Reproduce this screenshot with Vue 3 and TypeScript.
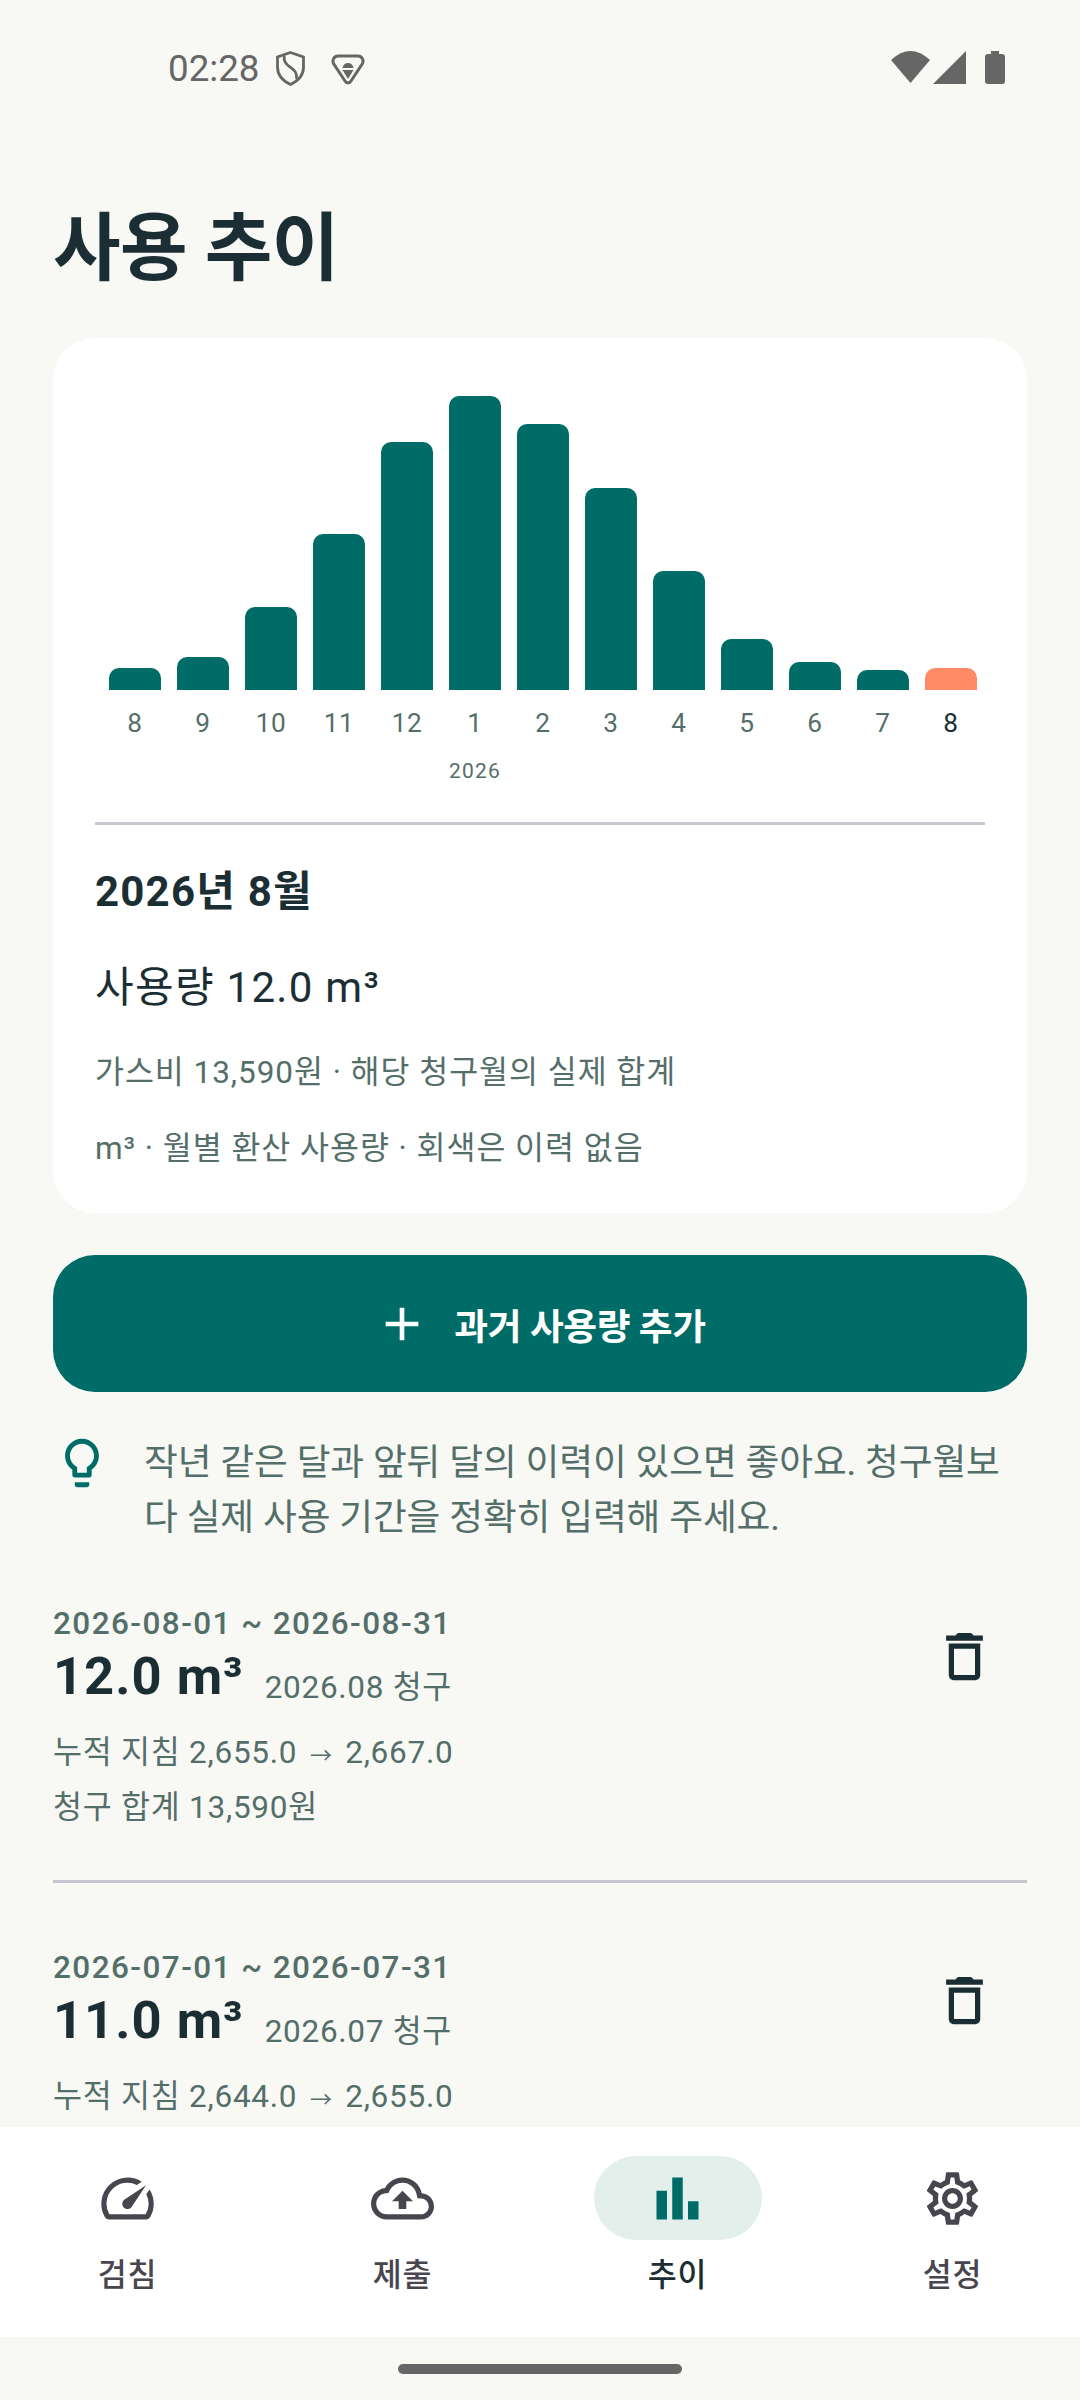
<script setup lang="ts">
interface Bar { month: number; height: number; current?: boolean; year?: string }
interface RecordRow { period: string; value: string; billed: string; from: string; to: string; total?: string }
interface NavItem { label: string; path: string; active?: boolean }

const bars: Bar[] = [
  { month: 8, height: 22 }, { month: 9, height: 33 }, { month: 10, height: 83 },
  { month: 11, height: 156 }, { month: 12, height: 248 }, { month: 1, height: 294, year: '2026' },
  { month: 2, height: 266 }, { month: 3, height: 202 }, { month: 4, height: 119 },
  { month: 5, height: 51 }, { month: 6, height: 28 }, { month: 7, height: 20 },
  { month: 8, height: 22, current: true },
]

const records: RecordRow[] = [
  { period: '2026-08-01 ~ 2026-08-31', value: '12.0 m³', billed: '2026.08 청구', from: '2,655.0', to: '2,667.0', total: '청구 합계 13,590원' },
  { period: '2026-07-01 ~ 2026-07-31', value: '11.0 m³', billed: '2026.07 청구', from: '2,644.0', to: '2,655.0' },
]

const nav: NavItem[] = [
  { label: '검침', path: 'M20.38 8.57l-1.23 1.85a8 8 0 0 1-.22 7.58H5.07A8 8 0 0 1 15.58 6.85l1.85-1.23A10 10 0 0 0 3.35 19a2 2 0 0 0 1.72 1h13.85a2 2 0 0 0 1.74-1 10 10 0 0 0-.27-10.44zm-9.79 6.84a2 2 0 0 0 2.83 0l5.66-8.49-8.49 5.66a2 2 0 0 0 0 2.83z' },
  { label: '제출', path: 'M19.35 10.04C18.67 6.59 15.64 4 12 4 9.11 4 6.6 5.64 5.35 8.04 2.34 8.36 0 10.91 0 14c0 3.31 2.69 6 6 6h13c2.76 0 5-2.24 5-5 0-2.64-2.05-4.78-4.65-4.96zM19 18H6c-2.21 0-4-1.79-4-4 0-2.05 1.53-3.76 3.56-3.97l1.07-.11.5-.95C8.08 7.14 9.94 6 12 6c2.62 0 4.88 1.86 5.39 4.43l.3 1.5 1.53.11c1.56.1 2.78 1.41 2.78 2.96 0 1.65-1.35 3-3 3zM8 13h2.55v3h2.9v-3H16l-4-4z' },
  { label: '추이', active: true, path: 'M4 9h4v11H4zm12 4h4v7h-4zm-6-9h4v16h-4z' },
  { label: '설정', path: 'M19.43 12.98c.04-.32.07-.64.07-.98 0-.34-.03-.66-.07-.98l2.11-1.65c.19-.15.24-.42.12-.64l-2-3.46c-.09-.16-.26-.25-.44-.25-.06 0-.12.01-.17.03l-2.49 1c-.52-.4-1.08-.73-1.69-.98l-.38-2.65C14.46 2.18 14.25 2 14 2h-4c-.25 0-.46.18-.49.42l-.38 2.65c-.61.25-1.17.59-1.69.98l-2.49-1c-.06-.02-.12-.03-.18-.03-.17 0-.34.09-.43.25l-2 3.46c-.13.22-.07.49.12.64l2.11 1.65c-.04.32-.07.65-.07.98 0 .33.03.66.07.98l-2.11 1.65c-.19.15-.24.42-.12.64l2 3.46c.09.16.26.25.44.25.06 0 .12-.01.17-.03l2.49-1c.52.4 1.08.73 1.69.98l.38 2.65c.03.24.24.42.49.42h4c.25 0 .46-.18.49-.42l.38-2.65c.61-.25 1.17-.59 1.69-.98l2.49 1c.06.02.12.03.18.03.17 0 .34-.09.43-.25l2-3.46c.12-.22.07-.49-.12-.64l-2.11-1.65zm-1.98-1.71c.04.31.05.52.05.73 0 .21-.02.43-.05.73l-.14 1.13.89.7 1.08.84-.7 1.21-1.27-.51-1.04-.42-.9.68c-.43.32-.84.56-1.25.73l-1.06.43-.16 1.13-.2 1.35h-1.4l-.19-1.35-.16-1.13-1.06-.43c-.43-.18-.83-.41-1.23-.71l-.91-.7-1.06.43-1.27.51-.7-1.21 1.08-.84.89-.7-.14-1.13c-.03-.31-.05-.54-.05-.74s.02-.43.05-.73l.14-1.13-.89-.7-1.08-.84.7-1.21 1.27.51 1.04.42.9-.68c.43-.32.84-.56 1.25-.73l1.06-.43.16-1.13.2-1.35h1.39l.19 1.35.16 1.13 1.06.43c.43.18.83.41 1.23.71l.91.7 1.06-.43 1.27-.51.7 1.21-1.07.85-.89.7.14 1.13zM12 8c-2.21 0-4 1.79-4 4s1.79 4 4 4 4-1.79 4-4-1.79-4-4-4zm0 6c-1.1 0-2-.9-2-2s.9-2 2-2 2 .9 2 2-.9 2-2 2z' },
]
</script>

<template>
  <div class="phone">
    <header class="status">
      <span class="time">02:28</span>
      <svg class="shield" width="29" height="35" viewBox="0 0 29 35" fill="none" stroke="#666" stroke-width="2.800">
        <path d="M14.500 1.500 27.500 6v10c0 8-5.500 14-13 17.500C7 30 1.500 24 1.500 16V6z" />
        <path d="M8.500 5c-1.500 5 1 8 5.500 11s7.500 6 6.500 12" />
      </svg>
      <svg class="vpn" width="34" height="31" viewBox="0 0 34 31">
        <path d="M7 2h20c4 0 6 4 4.500 7.500L20 27c-1.500 2.500-4.500 2.500-6 0L2.500 9.500C1 6 3 2 7 2z" fill="none" stroke="#666" stroke-width="3" />
        <path d="M11.500 14c.3-3 2.500-5 5.500-5s5.200 2 5.500 5zM11.500 16h11L17 25z" fill="#666" />
      </svg>
      <div class="status-right">
        <svg width="39" height="32" viewBox="0 0 39 32"><path d="M0 9Q19.500-9 39 9L19.500 32Z" fill="#666" /></svg>
        <svg width="33" height="33" viewBox="0 0 33 33"><path d="M33 0V33H0Z" fill="#666" /></svg>
        <svg class="battery" width="20" height="33" viewBox="0 0 20 33"><path d="M6 0h8v3h3a3 3 0 0 1 3 3v24a3 3 0 0 1-3 3H3a3 3 0 0 1-3-3V6a3 3 0 0 1 3-3h3z" fill="#666" /></svg>
      </div>
    </header>

    <main class="content">
      <h1 class="title">사용 추이</h1>

      <section class="card">
        <div class="chart">
          <div v-for="(bar, index) in bars" :key="index" class="column">
            <div class="plot">
              <div class="bar" :class="{ 'bar-current': bar.current }" :style="{ height: bar.height + 'px' }"></div>
            </div>
            <span class="month" :class="{ 'month-current': bar.current }">{{ bar.month }}</span>
            <span v-if="bar.year" class="year">{{ bar.year }}</span>
          </div>
        </div>
        <hr class="rule" />
        <h2 class="selected">2026년 8월</h2>
        <p class="usage">사용량 12.0 m³</p>
        <p class="note note-first">가스비 13,590원 · 해당 청구월의 실제 합계</p>
        <p class="note note-second">m³ · 월별 환산 사용량 · 회색은 이력 없음</p>
      </section>

      <button class="add" type="button">
        <svg width="56" height="56" viewBox="0 0 24 24" fill="#fff"><path d="M19 13h-6v6h-2v-6H5v-2h6V5h2v6h6v2z" /></svg>
        <span>과거 사용량 추가</span>
      </button>

      <div class="tip">
        <svg class="bulb" width="58" height="58" viewBox="0 0 24 24" fill="#006c67"><path d="M9 21c0 .55.45 1 1 1h4c.55 0 1-.45 1-1v-1H9v1zm3-19C8.140 2 5 5.140 5 9c0 2.380 1.190 4.470 3 5.740V17c0 .55.45 1 1 1h6c.55 0 1-.45 1-1v-2.260c1.810-1.270 3-3.360 3-5.740 0-3.860-3.140-7-7-7zm2.850 11.100l-.85.6V16h-4v-2.300l-.85-.6C7.800 12.160 7 10.630 7 9c0-2.760 2.240-5 5-5s5 2.240 5 5c0 1.630-.8 3.160-2.150 4.100z" /></svg>
        <p>작년 같은 달과 앞뒤 달의 이력이 있으면 좋아요. 청구월보다 실제 사용 기간을 정확히 입력해 주세요.</p>
      </div>

      <article v-for="record in records" :key="record.period" class="record">
        <div class="record-info">
          <div class="period">{{ record.period }}</div>
          <div class="value-row">
            <span class="value">{{ record.value }}</span>
            <span class="billed">{{ record.billed }}</span>
          </div>
          <div class="detail detail-first">누적 지침 {{ record.from }} <span class="arrow">→</span> {{ record.to }}</div>
          <div v-if="record.total" class="detail">{{ record.total }}</div>
        </div>
        <button class="delete" type="button" aria-label="삭제">
          <svg width="63" height="63" viewBox="0 0 24 24" fill="#1a2e33"><path d="M16 9v10H8V9h8m-1.500-6h-5l-1 1H5v2h14V4h-3.500l-1-1zM18 7H6v12c0 1.100.9 2 2 2h8c1.100 0 2-.9 2-2V7z" /></svg>
        </button>
      </article>
    </main>

    <nav class="nav">
      <div v-for="item in nav" :key="item.label" class="nav-item" :class="{ 'nav-active': item.active }">
        <div class="pill">
          <svg width="63" height="63" viewBox="0 0 24 24"><path :d="item.path" /></svg>
        </div>
        <span class="nav-label">{{ item.label }}</span>
      </div>
    </nav>

    <div class="gesture"><div class="handle"></div></div>
  </div>
</template>

<style>
html, body { margin: 0; padding: 0; background: #f8f8f4; }
</style>

<style scoped>
.phone {
  width: 1080px;
  height: 2400px;
  display: flex;
  flex-direction: column;
  overflow: hidden;
  background: #f8f8f4;
  color: #1a2e33;
  font-family: Roboto, "Noto Sans CJK KR", sans-serif;
}
.status {
  flex: 0 0 126px;
  box-sizing: border-box;
  display: flex;
  align-items: flex-start;
  padding: 51px 75px 0 168px;
}
.time {
  font-size: 36.75px;
  line-height: 36px;
  color: #666;
  width: 108px;
}
.shield { flex: none; }
.vpn { flex: none; margin: 3px 0 0 26px; }
.status-right {
  margin-left: auto;
  display: flex;
  align-items: flex-start;
  gap: 3px;
}
.battery { margin-left: 16px; }
.content {
  flex: 1;
  min-height: 0;
  overflow: hidden;
  padding: 0 53px;
}
.title {
  margin: 73px 0 39px;
  font-size: 73.5px;
  line-height: 100px;
  font-weight: 700;
  letter-spacing: -0.6px;
}
.card {
  background: #fff;
  border-radius: 42px;
  padding: 42px 42px 40px;
}
.chart {
  display: flex;
  justify-content: center;
  gap: 16px;
  height: 442px;
  padding-left: 6px;
}
.column {
  flex: 0 0 52px;
  min-width: 0;
  width: 52px;
  display: flex;
  flex-direction: column;
  align-items: center;
}
.plot {
  flex: none;
  width: 100%;
  height: 310px;
  display: flex;
  align-items: flex-end;
}
.bar {
  width: 100%;
  background: #006c67;
  border-radius: 10px 10px 0 0;
}
.bar-current { background: #ff8a65; }
.month {
  margin-top: 17px;
  font-size: 26.25px;
  line-height: 32px;
  letter-spacing: 0.5px;
  color: #546e6a;
}
.month-current { color: #1a2e33; }
.year {
  margin-top: 18px;
  font-size: 21px;
  line-height: 28px;
  letter-spacing: 1.2px;
  color: #546e6a;
}
.rule {
  margin: 0;
  border: 0;
  height: 3px;
  background: #cac4d0;
}
.selected {
  margin: 39px 0 0;
  font-size: 42px;
  line-height: 55px;
  font-weight: 700;
  letter-spacing: 1.2px;
}
.usage {
  margin: 41px 0 0;
  font-size: 42px;
  line-height: 56px;
  letter-spacing: 1.3px;
}
.note {
  margin: 0;
  font-size: 31.5px;
  line-height: 48px;
  letter-spacing: 0.95px;
  color: #546e6a;
}
.note-first { margin-top: 33px; }
.note-second { margin-top: 28px; }
.add {
  width: 100%;
  height: 137px;
  margin-top: 42px;
  border: 0;
  border-radius: 42px;
  background: #006c67;
  color: #fff;
  display: flex;
  align-items: center;
  justify-content: center;
  gap: 24px;
  font-family: inherit;
  font-size: 36.75px;
  font-weight: 700;
  letter-spacing: -0.4px;
  padding: 0;
}
.tip {
  margin-top: 43px;
  display: flex;
  gap: 33px;
  align-items: flex-start;
}
.bulb { flex: none; margin-top: -1px; }
.tip p {
  flex: 1;
  margin: 0;
  font-size: 36.75px;
  line-height: 55px;
  letter-spacing: -0.14px;
  color: #546e6a;
  word-break: break-all;
}
.record {
  display: flex;
  align-items: flex-start;
  padding: 64px 0 45px;
}
.record:first-of-type { padding-top: 58px; border-bottom: 3px solid #cac4d0; }
.record-info { flex: 1; min-width: 0; }
.period {
  font-size: 31.5px;
  line-height: 42px;
  font-weight: 500;
  letter-spacing: 1.43px;
  color: #546e6a;
}
.value-row {
  display: flex;
  align-items: flex-end;
  gap: 21px;
  height: 60px;
  margin-top: 1px;
}
.value {
  font-size: 52.5px;
  line-height: 60px;
  font-weight: 700;
  letter-spacing: 1px;
}
.billed {
  font-size: 31.5px;
  line-height: 36px;
  letter-spacing: 0.7px;
  color: #546e6a;
}
.detail {
  font-size: 31.5px;
  line-height: 55px;
  letter-spacing: 0.75px;
  color: #546e6a;
}
.detail-first { margin-top: 19px; }
.arrow { font-size: 22px; line-height: 1; margin: 0 4px; }
.delete {
  flex: none;
  width: 126px;
  height: 126px;
  margin-top: -10px;
  border: 0;
  padding: 0;
  background: transparent;
  display: flex;
  align-items: center;
  justify-content: center;
}
.nav {
  flex: 0 0 210px;
  box-sizing: border-box;
  display: flex;
  justify-content: center;
  background: #fff;
  padding-top: 29px;
}
.nav-item {
  flex: 0 0 275px;
  display: flex;
  flex-direction: column;
  align-items: center;
}
.pill {
  width: 168px;
  height: 84px;
  border-radius: 42px;
  display: flex;
  align-items: center;
  justify-content: center;
  fill: #49454f;
}
.nav-active .pill { background: #e2efeb; fill: #006c67; }
.nav-label {
  margin-top: 12px;
  font-size: 31.5px;
  line-height: 48px;
  font-weight: 500;
  letter-spacing: 0.8px;
  color: #49454f;
}
.nav-active .nav-label { color: #1a2e33; }
.gesture {
  flex: 0 0 63px;
  display: flex;
  justify-content: center;
  padding-top: 27px;
  box-sizing: border-box;
}
.handle {
  width: 284px;
  height: 10px;
  border-radius: 5px;
  background: #666;
}
</style>
